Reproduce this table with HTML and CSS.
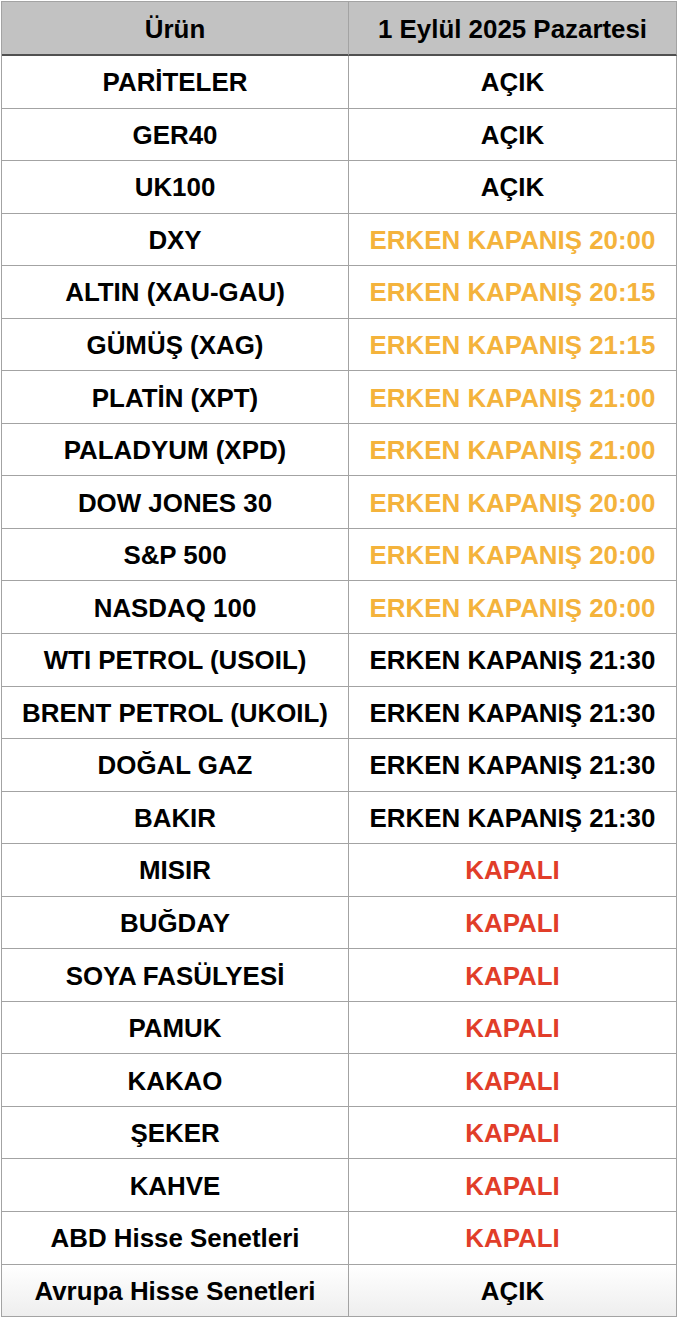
FILE: index.html
```html
<!DOCTYPE html>
<html lang="tr">
<head>
<meta charset="utf-8">
<title>Piyasa Saatleri</title>
<link rel="stylesheet" href="styles.css">
</head>
<body>
<div class="table">
  <div class="cell head">Ürün</div><div class="cell head">1 Eylül 2025 Pazartesi</div>
  <div class="cell">PARİTELER</div><div class="cell">AÇIK</div>
  <div class="cell">GER40</div><div class="cell">AÇIK</div>
  <div class="cell">UK100</div><div class="cell">AÇIK</div>
  <div class="cell">DXY</div><div class="cell early">ERKEN KAPANIŞ 20:00</div>
  <div class="cell">ALTIN (XAU-GAU)</div><div class="cell early">ERKEN KAPANIŞ 20:15</div>
  <div class="cell">GÜMÜŞ (XAG)</div><div class="cell early">ERKEN KAPANIŞ 21:15</div>
  <div class="cell">PLATİN (XPT)</div><div class="cell early">ERKEN KAPANIŞ 21:00</div>
  <div class="cell">PALADYUM (XPD)</div><div class="cell early">ERKEN KAPANIŞ 21:00</div>
  <div class="cell">DOW JONES 30</div><div class="cell early">ERKEN KAPANIŞ 20:00</div>
  <div class="cell">S&amp;P 500</div><div class="cell early">ERKEN KAPANIŞ 20:00</div>
  <div class="cell">NASDAQ 100</div><div class="cell early">ERKEN KAPANIŞ 20:00</div>
  <div class="cell">WTI PETROL (USOIL)</div><div class="cell">ERKEN KAPANIŞ 21:30</div>
  <div class="cell">BRENT PETROL (UKOIL)</div><div class="cell">ERKEN KAPANIŞ 21:30</div>
  <div class="cell">DOĞAL GAZ</div><div class="cell">ERKEN KAPANIŞ 21:30</div>
  <div class="cell">BAKIR</div><div class="cell">ERKEN KAPANIŞ 21:30</div>
  <div class="cell">MISIR</div><div class="cell closed">KAPALI</div>
  <div class="cell">BUĞDAY</div><div class="cell closed">KAPALI</div>
  <div class="cell">SOYA FASÜLYESİ</div><div class="cell closed">KAPALI</div>
  <div class="cell">PAMUK</div><div class="cell closed">KAPALI</div>
  <div class="cell">KAKAO</div><div class="cell closed">KAPALI</div>
  <div class="cell">ŞEKER</div><div class="cell closed">KAPALI</div>
  <div class="cell">KAHVE</div><div class="cell closed">KAPALI</div>
  <div class="cell">ABD Hisse Senetleri</div><div class="cell closed">KAPALI</div>
  <div class="cell last">Avrupa Hisse Senetleri</div><div class="cell last">AÇIK</div>
</div>
</body>
</html>
```
FILE: styles.css
```css
html, body {
  margin: 0;
  padding: 0;
  background: #ffffff;
}
body {
  padding: 1px 0 0 1px;
}
.table {
  display: grid;
  grid-template-columns: 347px 328px;
  grid-template-rows: 54px repeat(24, 52.55px);
  width: max-content;
  border-left: 1px solid #a3a3a3;
  border-top: 1px solid #a3a3a3;
  font-family: "Liberation Sans", Arial, Helvetica, sans-serif;
  font-weight: bold;
  font-size: 25.9px;
  color: #000000;
}
.cell {
  display: flex;
  align-items: center;
  justify-content: center;
  border-right: 1px solid #a3a3a3;
  border-bottom: 1px solid #a3a3a3;
  white-space: nowrap;
  padding-top: 2px;
  box-sizing: border-box;
}
.head {
  background: #c2c2c2;
  border-bottom: 2px solid #505050;
}
.early {
  color: #f4b33c;
}
.closed {
  color: #e13d29;
}
.last {
  background: linear-gradient(to bottom, #ffffff, #eeeeee);
}
```
